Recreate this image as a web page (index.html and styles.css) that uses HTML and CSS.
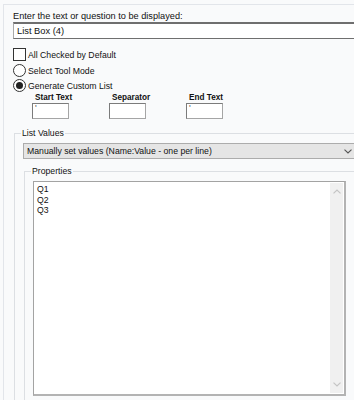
FILE: index.html
```html
<!DOCTYPE html>
<html lang="en">

<head>
    <meta charset="UTF-8">
    <title>List Box</title>
    <link rel="stylesheet" href="styles.css">
</head>

<body>
    <div class=panel>
        <div class=prompt>Enter the text or question to be displayed:</div>
        <div class=title-input>List Box (4)</div>

        <div class=options>
            <div class=option><span class=checkbox></span>All Checked by Default</div>
            <div class=option><span class=radio></span>Select Tool Mode</div>
            <div class=option><span class="radio on"></span>Generate Custom List</div>
        </div>

        <div class=custom>
            <div class=field>
                <div class=field-label>Start Text</div>
                <div class=small-box>'</div>
            </div>
            <div class=field>
                <div class=field-label>Separator</div>
                <div class=small-box></div>
            </div>
            <div class=field>
                <div class=field-label>End Text</div>
                <div class=small-box>'</div>
            </div>
        </div>

        <fieldset class="group outer">
            <legend>List Values</legend>
            <div class=dropdown>
                <span>Manually set values (Name:Value - one per line)</span>
                <svg class=chevron width="8" height="5" viewBox="0 0 8 5">
                    <path d="M0.5 0.6 L4 4 L7.5 0.6" fill="none" stroke="#555" stroke-width="1.1" />
                </svg>
            </div>

            <fieldset class="group inner">
                <legend>Properties</legend>
                <div class=listbox>
                    <div class=lines>Q1<br>Q2<br>Q3</div>
                    <div class=scrollbar>
                        <svg width="8" height="5" viewBox="0 0 8 5">
                            <path d="M0.5 4.4 L4 1 L7.5 4.4" fill="none" stroke="#c4c4c4" stroke-width="1.2" />
                        </svg>
                        <svg width="8" height="5" viewBox="0 0 8 5">
                            <path d="M0.5 0.6 L4 4 L7.5 0.6" fill="none" stroke="#c4c4c4" stroke-width="1.2" />
                        </svg>
                    </div>
                </div>
            </fieldset>
        </fieldset>
    </div>
</body>

</html>
```

FILE: styles.css
```css
body {
    margin: 0;
    background-color: #f9fafb;
    font-family: "Liberation Sans", Arial, sans-serif;
    font-size: 8.7px;
    color: #111;
    overflow: hidden;
}

.panel {
    box-sizing: border-box;
    margin: 4px 0 0 3px;
    height: 396px;
    border-top: 1px solid #e2e5ea;
    border-left: 1px solid #e2e5ea;
    padding: 6px 0 0 9px;
}

.prompt {
    font-size: 9.2px;
    line-height: 11px;
    white-space: nowrap;
}

.title-input {
    box-sizing: border-box;
    height: 17px;
    background-color: white;
    border: 1px solid #a9a9a9;
    border-top: 2px solid #6f6f6f;
    border-bottom: 1px solid #6f6f6f;
    border-right: none;
    padding-left: 3px;
    line-height: 14px;
    font-size: 9.3px;
}

.options {
    margin-top: 8px;
}

.option {
    display: flex;
    align-items: center;
    height: 15px;
}

.option:first-child {
    margin-bottom: 1px;
}

.checkbox,
.radio {
    box-sizing: border-box;
    width: 13px;
    height: 13px;
    border: 1px solid #333;
    background-color: white;
    margin-right: 2px;
}

.radio {
    border-radius: 50%;
    display: flex;
    align-items: center;
    justify-content: center;
}

.radio.on::after {
    content: "";
    width: 7px;
    height: 7px;
    border-radius: 50%;
    background-color: #222;
}

.custom {
    display: flex;
    gap: 40px;
    margin-left: 19px;
}

.field {
    width: 37px;
}

.field-label {
    font-weight: bold;
    font-size: 8.2px;
    line-height: 10px;
    padding-left: 3px;
    white-space: nowrap;
}

.small-box {
    box-sizing: border-box;
    width: 37px;
    height: 16px;
    background-color: white;
    border: 1px solid #7b7b7b;
    border-right-color: #a5a5a5;
    border-bottom-color: #a5a5a5;
    font-size: 9px;
    line-height: 9px;
    padding-left: 2px;
    color: #555;
}

.group {
    box-sizing: border-box;
    margin: 7px 0 0 1px;
    border: 1px solid #dcdfe3;
    border-right: none;
    border-bottom: none;
    padding: 0 0 0 8px;
    min-width: 0;
}

.group.outer {
    height: 274px;
}

.group legend {
    margin-left: -2px;
    padding: 0 1px;
    line-height: 14px;
}

.dropdown {
    box-sizing: border-box;
    margin-top: 3px;
    height: 16px;
    background-color: #e5e5e5;
    border: 1px solid #acacac;
    border-right: none;
    padding: 0 2px 0 3px;
    display: flex;
    align-items: center;
    justify-content: space-between;
    white-space: nowrap;
}

.group.inner {
    margin-top: 5px;
    height: 237px;
}

.listbox {
    box-sizing: border-box;
    margin-top: 3px;
    width: 313px;
    height: 215px;
    background-color: white;
    border: 1px solid #a3a3a3;
    border-right: 2px solid #b3b3b3;
    border-bottom: 2px solid #b3b3b3;
    display: flex;
}

.lines {
    flex: 1;
    padding: 2px 0 0 3px;
    line-height: 10.5px;
    font-size: 8.7px;
}

.scrollbar {
    width: 13px;
    margin: 1px 1px 1px 0;
    background-color: #f0f0f0;
    display: flex;
    flex-direction: column;
    justify-content: space-between;
    align-items: center;
    padding: 6px 0;
}
```
